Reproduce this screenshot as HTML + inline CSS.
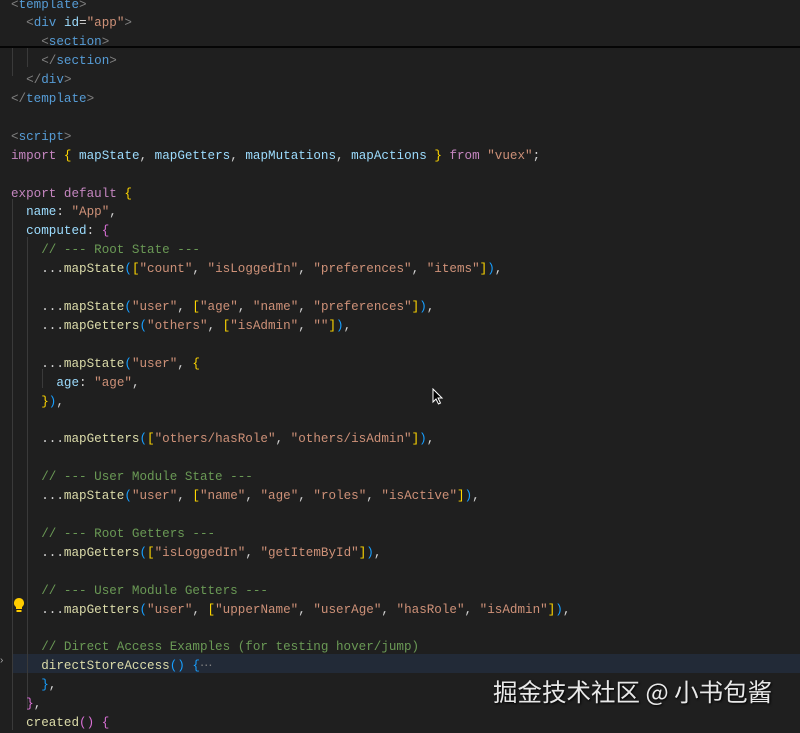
<!DOCTYPE html>
<html><head><meta charset="utf-8"><style>
html,body{margin:0;padding:0;width:800px;height:730px;overflow:hidden;background:#1f1f1f}
#ed{position:absolute;left:0;top:0;width:800px;height:730px}
pre{position:absolute;left:11px;top:-4.5px;margin:0;font-family:"Liberation Mono",monospace;font-size:12.6px;line-height:18.9px;color:#d4d4d4;white-space:pre}
.k{color:#c586c0}.p{color:#9cdcfe}.s{color:#ce9178}.f{color:#dcdcaa}.c{color:#6a9955}.t{color:#569cd6}.g{color:#808080}.y{color:#ffd700}.o{color:#da70d6}.b{color:#179fff}
.guide{position:absolute;width:1px;background:#3a3a3a}
.hl{position:absolute;left:12px;top:654px;width:788px;height:19px;background:#222a37}
.wm{position:absolute;left:493px;top:674px;font-family:"Noto Sans CJK SC",sans-serif;font-size:24.5px;color:#e8e8e8;text-shadow:1px 1px 2px #000;white-space:nowrap}
</style></head><body><div id="ed">
<div class="hl"></div>
<div style="position:absolute;left:0;top:46px;width:800px;height:2px;background:#050505"></div>
<div class="guide" style="left:12px;top:48px;height:28px"></div>
<div class="guide" style="left:27px;top:48px;height:19px"></div>
<div class="guide" style="left:12px;top:199px;height:531px"></div>
<div class="guide" style="left:27px;top:237px;height:473px"></div>
<div class="guide" style="left:42px;top:369px;height:19px"></div>
<pre><span class="g">&lt;</span><span class="t">template</span><span class="g">&gt;</span>
  <span class="g">&lt;</span><span class="t">div</span> <span class="p">id</span>=<span class="s">"app"</span><span class="g">&gt;</span>
    <span class="g">&lt;</span><span class="t">section</span><span class="g">&gt;</span>
    <span class="g">&lt;/</span><span class="t">section</span><span class="g">&gt;</span>
  <span class="g">&lt;/</span><span class="t">div</span><span class="g">&gt;</span>
<span class="g">&lt;/</span><span class="t">template</span><span class="g">&gt;</span>

<span class="g">&lt;</span><span class="t">script</span><span class="g">&gt;</span>
<span class="k">import</span> <span class="y">{</span> <span class="p">mapState</span>, <span class="p">mapGetters</span>, <span class="p">mapMutations</span>, <span class="p">mapActions</span> <span class="y">}</span> <span class="k">from</span> <span class="s">"vuex"</span>;

<span class="k">export</span> <span class="k">default</span> <span class="y">{</span>
  <span class="p">name</span>: <span class="s">"App"</span>,
  <span class="p">computed</span>: <span class="o">{</span>
    <span class="c">// --- Root State ---</span>
    ...<span class="f">mapState</span><span class="b">(</span><span class="y">[</span><span class="s">"count"</span>, <span class="s">"isLoggedIn"</span>, <span class="s">"preferences"</span>, <span class="s">"items"</span><span class="y">]</span><span class="b">)</span>,

    ...<span class="f">mapState</span><span class="b">(</span><span class="s">"user"</span>, <span class="y">[</span><span class="s">"age"</span>, <span class="s">"name"</span>, <span class="s">"preferences"</span><span class="y">]</span><span class="b">)</span>,
    ...<span class="f">mapGetters</span><span class="b">(</span><span class="s">"others"</span>, <span class="y">[</span><span class="s">"isAdmin"</span>, <span class="s">""</span><span class="y">]</span><span class="b">)</span>,

    ...<span class="f">mapState</span><span class="b">(</span><span class="s">"user"</span>, <span class="y">{</span>
      <span class="p">age</span>: <span class="s">"age"</span>,
    <span class="y">}</span><span class="b">)</span>,

    ...<span class="f">mapGetters</span><span class="b">(</span><span class="y">[</span><span class="s">"others/hasRole"</span>, <span class="s">"others/isAdmin"</span><span class="y">]</span><span class="b">)</span>,

    <span class="c">// --- User Module State ---</span>
    ...<span class="f">mapState</span><span class="b">(</span><span class="s">"user"</span>, <span class="y">[</span><span class="s">"name"</span>, <span class="s">"age"</span>, <span class="s">"roles"</span>, <span class="s">"isActive"</span><span class="y">]</span><span class="b">)</span>,

    <span class="c">// --- Root Getters ---</span>
    ...<span class="f">mapGetters</span><span class="b">(</span><span class="y">[</span><span class="s">"isLoggedIn"</span>, <span class="s">"getItemById"</span><span class="y">]</span><span class="b">)</span>,

    <span class="c">// --- User Module Getters ---</span>
    ...<span class="f">mapGetters</span><span class="b">(</span><span class="s">"user"</span>, <span class="y">[</span><span class="s">"upperName"</span>, <span class="s">"userAge"</span>, <span class="s">"hasRole"</span>, <span class="s">"isAdmin"</span><span class="y">]</span><span class="b">)</span>,

    <span class="c">// Direct Access Examples (for testing hover/jump)</span>
    <span class="f">directStoreAccess</span><span class="b">()</span> <span class="b">{</span><span style="color:#808080">⋯</span>
    <span class="b">}</span>,
  <span class="o">}</span>,
  <span class="f">created</span><span class="o">()</span> <span class="o">{</span>
</pre>
<svg style="position:absolute;left:13px;top:597px" width="12" height="16" viewBox="0 0 12 16"><path d="M6 1a5 5 0 0 0-3 9v2h6v-2a5 5 0 0 0-3-9z" fill="#ffcc00"/><rect x="3.5" y="13" width="5" height="2" fill="#ffcc00"/></svg>
<div style="position:absolute;left:0;top:655px;font:10px 'Liberation Sans',sans-serif;color:#aaa">›</div>
<svg style="position:absolute;left:432px;top:388px" width="12" height="18" viewBox="0 0 12 18"><path d="M1 1v13l3-3 2.5 5 2-1-2.5-5h4z" fill="#000" stroke="#fff" stroke-width="1"/></svg>
<div class="wm">掘金技术社区 @ 小书包酱</div>
</div></body></html>
